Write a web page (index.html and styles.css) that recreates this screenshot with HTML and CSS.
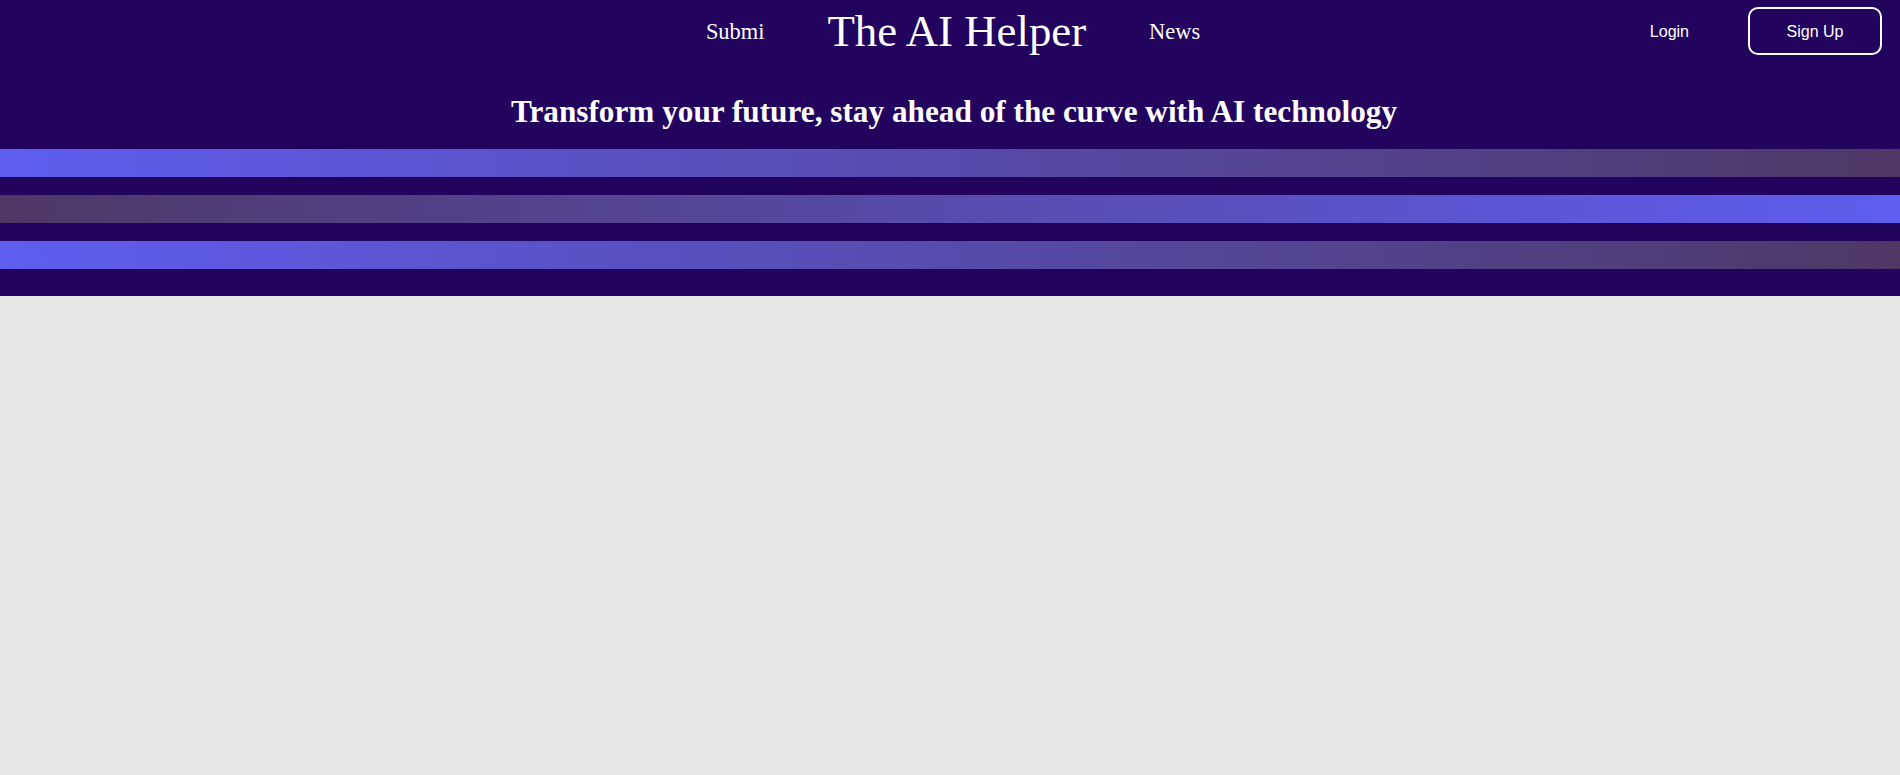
FILE: index.html
```html
<!DOCTYPE html>
<html lang="en">
<head>
<meta charset="utf-8">
<title>The AI Helper</title>
<link rel="stylesheet" href="styles.css">
</head>
<body>
<header class="hero">
  <nav class="topbar">
    <div class="spacer"></div>
    <div class="center">
      <a class="navlink" href="#">Submi</a>
      <h1 class="brand">The AI Helper</h1>
      <a class="navlink" href="#">News</a>
    </div>
    <div class="auth">
      <a class="login" href="#">Login</a>
      <a class="signup" href="#">Sign Up</a>
    </div>
  </nav>
  <h2 class="tagline">Transform your future, stay ahead of the curve with AI technology</h2>
  <div class="bars">
    <div class="bar bar-fwd"></div>
    <div class="bar bar-rev"></div>
    <div class="bar bar-fwd"></div>
  </div>
</header>
<main class="content"></main>
</body>
</html>
```
FILE: styles.css
```css
html, body {
  margin: 0;
  padding: 0;
}
body {
  background: #e6e6e6;
  font-family: "Liberation Serif", "Times New Roman", serif;
  min-height: 775px;
}
.hero {
  background: #22045e;
  color: #fff;
  padding-bottom: 27px;
}
.topbar {
  display: grid;
  grid-template-columns: 1fr auto 1fr;
  align-items: center;
  height: 62px;
  padding-left: 6px;
}
.center {
  display: flex;
  align-items: center;
  gap: 63px;
  padding-top: 2px;
}
.navlink {
  color: #fff;
  text-decoration: none;
  font-size: 22.4px;
}
.brand {
  margin: 0;
  font-weight: normal;
  font-size: 44.8px;
  line-height: 1.15;
}
.auth {
  display: flex;
  justify-content: flex-end;
  align-items: center;
  gap: 59px;
  padding-right: 18px;
  font-family: "Liberation Sans", Arial, sans-serif;
  font-size: 16px;
}
.login {
  color: #fff;
  text-decoration: none;
  padding-top: 2px;
}
.signup {
  box-sizing: border-box;
  width: 134px;
  height: 48px;
  border: 2px solid #fff;
  border-radius: 10px;
  color: #fff;
  text-decoration: none;
  display: flex;
  align-items: center;
  justify-content: center;
  padding-top: 1px;
}
.tagline {
  margin: 32px 0 19px;
  padding-left: 8px;
  text-align: center;
  font-size: 31.25px;
  line-height: 36px;
  font-weight: bold;
}
.bars {
  display: flex;
  flex-direction: column;
  gap: 18px;
}
.bar {
  height: 28px;
}
.bar-fwd {
  background: linear-gradient(to right, #5e5ef0, #4f3866);
}
.bar-rev {
  background: linear-gradient(to right, #4f3866, #5e5ef0);
}
.content {
  min-height: 479px;
}
```
